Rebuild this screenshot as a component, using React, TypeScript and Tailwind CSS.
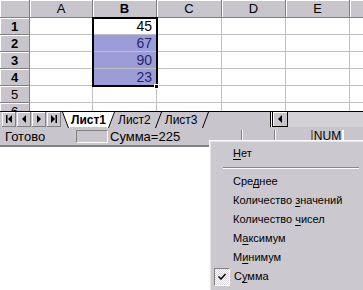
import React from 'react';

interface Column {
  label: string;
  width: string;
}

interface Row {
  num: string;
  height: string;
  value: string;
  filled: boolean;
  bold: boolean;
}

const columns: Column[] = [
  { label: 'A', width: 'w-[63px]' },
  { label: 'B', width: 'w-[64px]' },
  { label: 'C', width: 'w-[65px]' },
  { label: 'D', width: 'w-[64px]' },
  { label: 'E', width: 'w-[64px]' },
  { label: '', width: 'w-[40px]' },
];

const rows: Row[] = [
  { num: '1', height: 'h-[17px]', value: '45', filled: false, bold: true },
  { num: '2', height: 'h-[17px]', value: '67', filled: true, bold: true },
  { num: '3', height: 'h-[17px]', value: '90', filled: true, bold: true },
  { num: '4', height: 'h-[17px]', value: '23', filled: true, bold: true },
  { num: '5', height: 'h-[17px]', value: '', filled: false, bold: false },
  { num: '6', height: 'h-[17px]', value: '', filled: false, bold: false },
];

// status bar menu: text + index of underlined letter
const menuItems = [
  { text: 'Среднее', u: 3 },
  { text: 'Количество значений', u: 11 },
  { text: 'Количество чисел', u: 11 },
  { text: 'Максимум', u: 1 },
  { text: 'Минимум', u: 1 },
];

const Underlined: React.FC<{ text: string; u: number }> = ({ text, u }) => (
  <span>
    {text.slice(0, u)}
    <span className="underline underline-offset-2">{text[u]}</span>
    {text.slice(u + 1)}
  </span>
);

const NavButton: React.FC<{ kind: 'first' | 'prev' | 'next' | 'last' }> = ({ kind }) => (
  <div className="w-[14px] h-[15px] flex items-center justify-center bg-[#c8c5cc] border-r border-b border-[#808080] shadow-[inset_1px_1px_0_#fff]">
    <svg width="8" height="8" viewBox="0 0 8 8">
      {kind === 'first' && (
        <>
          <rect x="1" y="0" width="1.5" height="8" fill="#000" />
          <polygon points="7,0 3,4 7,8" fill="#000" />
        </>
      )}
      {kind === 'prev' && <polygon points="6,0 2,4 6,8" fill="#000" />}
      {kind === 'next' && <polygon points="2,0 6,4 2,8" fill="#000" />}
      {kind === 'last' && (
        <>
          <polygon points="1,0 5,4 1,8" fill="#000" />
          <rect x="5.5" y="0" width="1.5" height="8" fill="#000" />
        </>
      )}
    </svg>
  </div>
);

const Slash: React.FC<{ dir: 'back' | 'fwd'; fill?: string }> = ({ dir, fill }) => (
  <svg width="8" height="16" viewBox="0 0 8 16" className="shrink-0">
    {fill && (
      <polygon points={dir === 'back' ? '0,0 8,0 8,16 6,16' : '0,0 8,0 2,16 0,16'} fill={fill} />
    )}
    <line
      x1={dir === 'back' ? 0.5 : 7.5}
      y1="0"
      x2={dir === 'back' ? 6.5 : 1.5}
      y2="16"
      stroke="#000"
      strokeWidth="1"
    />
  </svg>
);

const App: React.FC = () => {
  return (
    <div className="relative w-[363px] h-[290px] overflow-hidden bg-white font-['Liberation_Sans',Arial,sans-serif] text-black">
      {/* Grid */}
      <div className="relative h-[111px] overflow-hidden">
        {/* Column headers */}
        <div className="flex h-[18px]">
          <div className="w-[30px] shrink-0 bg-[#c8c5cc] border-r border-b border-[#808080] shadow-[inset_1px_1px_0_#fff]" />
          {columns.map((c) => (
            <div
              key={c.label || 'F'}
              className={`${c.width} shrink-0 flex items-center justify-center bg-[#c8c5cc] border-r border-b border-[#808080] shadow-[inset_1px_1px_0_#fff] text-[13px] leading-none ${c.label === 'B' ? 'font-bold' : ''}`}
            >
              {c.label}
            </div>
          ))}
        </div>
        {/* Rows */}
        {rows.map((r) => (
          <div key={r.num} className={`flex ${r.height}`}>
            <div
              className={`w-[30px] shrink-0 flex items-center justify-center bg-[#c8c5cc] border-r border-b border-[#808080] shadow-[inset_1px_1px_0_#fff] text-[13px] leading-none ${r.bold ? 'font-bold' : ''}`}
            >
              {r.num}
            </div>
            {columns.map((c) => (
              <div
                key={c.label || 'F'}
                className={`${c.width} shrink-0 flex items-center justify-end pr-[4px] border-r border-b border-[#c0c0c0] text-[14px] leading-none ${
                  c.label === 'B' && r.filled ? 'bg-[#9c9cd8] text-[#26266e]' : ''
                }`}
              >
                {c.label === 'B' ? r.value : ''}
              </div>
            ))}
          </div>
        ))}
        {/* Selection frame over B1:B4 */}
        <div className="absolute left-[92px] top-[17px] w-[66px] h-[70px] border-2 border-black pointer-events-none" />
        <div className="absolute left-[154px] top-[84px] w-[5px] h-[5px] bg-black border border-white pointer-events-none" />
      </div>

      {/* Sheet tabs + horizontal scrollbar */}
      <div className="flex h-[16px] bg-[#c8c5cc] border-t border-black">
        <div className="flex gap-[1px] pl-[2px] pr-[1px]">
          <NavButton kind="first" />
          <NavButton kind="prev" />
          <NavButton kind="next" />
          <NavButton kind="last" />
        </div>
        <div className="flex items-stretch text-[12px] leading-none">
          <Slash dir="back" fill="#fff" />
          <div className="flex items-center bg-white px-[1px] font-bold">Лист1</div>
          <Slash dir="fwd" fill="#fff" />
          <div className="flex items-center px-[3px]">Лист2</div>
          <Slash dir="fwd" />
          <div className="flex items-center px-[3px]">Лист3</div>
          <Slash dir="fwd" />
        </div>
        <div className="flex-1" />
        <div className="w-[3px] border-l border-r border-black bg-white" />
        <div className="w-[15px] flex items-center justify-center bg-[#c8c5cc] border-r border-b border-black shadow-[inset_1px_1px_0_#fff]">
          <svg width="6" height="8" viewBox="0 0 6 8">
            <polygon points="5,0 1,4 5,8" fill="#000" />
          </svg>
        </div>
        <div className="w-[75px] bg-[#d3d0d6]" />
      </div>

      {/* Status bar */}
      <div className="flex items-center h-[20px] bg-[#c8c5cc] text-[13px] leading-none border-b-2 border-[#808080]">
        <div className="w-[76px] pl-[5px]">Готово</div>
        <div className="w-[32px] h-[13px] border-t border-l border-[#808080] border-b border-r border-b-white border-r-white" />
        <div className="w-[134px] h-[13px] flex items-center pl-[2px] border-r border-[#808080]">Сумма=225</div>
        <div className="w-[33px] h-[13px] border-l border-r border-l-white border-r-[#808080]" />
        <div className="w-[37px] h-[13px] border-l border-r border-l-white border-r-[#808080]" />
        <div className="w-[31px] h-[13px] flex items-center justify-center border-l border-r border-l-[#808080] border-r-white text-[12px]">NUM</div>
        <div className="flex-1 h-[13px] border-l border-white" />
      </div>

      {/* Context menu */}
      <div className="absolute left-[209px] top-[140px] w-[160px] h-[155px] bg-[#ccc8d0] border-t border-l border-white shadow-[inset_1px_1px_0_#e6e4e8] pt-[3px] text-[11px] leading-none">
        <div className="h-[19px] flex items-center pl-[23px]">
          <Underlined text="Нет" u={0} />
        </div>
        <div className="h-[9px] flex items-center pl-[13px] pr-[10px]">
          <div className="w-full border-t border-b border-t-[#8a878e] border-b-white" />
        </div>
        {menuItems.map((m) => (
          <div key={m.text} className="h-[19px] flex items-center pl-[23px]">
            <Underlined text={m.text} u={m.u} />
          </div>
        ))}
        <div className="h-[19px] flex items-center">
          <div className="ml-[4px] mr-[4px] w-[16px] h-[18px] flex items-center justify-center border-t border-l border-b border-r border-t-[#808080] border-l-[#808080] border-b-white border-r-white bg-[repeating-conic-gradient(#ffffff_0_25%,#d8d6dc_0_50%)] bg-[length:2px_2px]">
            <svg width="8" height="7" viewBox="0 0 8 7">
              <polyline points="0.5,3.5 3,6 7.5,1" fill="none" stroke="#000" strokeWidth="1.5" />
            </svg>
          </div>
          <Underlined text="Сумма" u={1} />
        </div>
      </div>
    </div>
  );
};

export default App;
